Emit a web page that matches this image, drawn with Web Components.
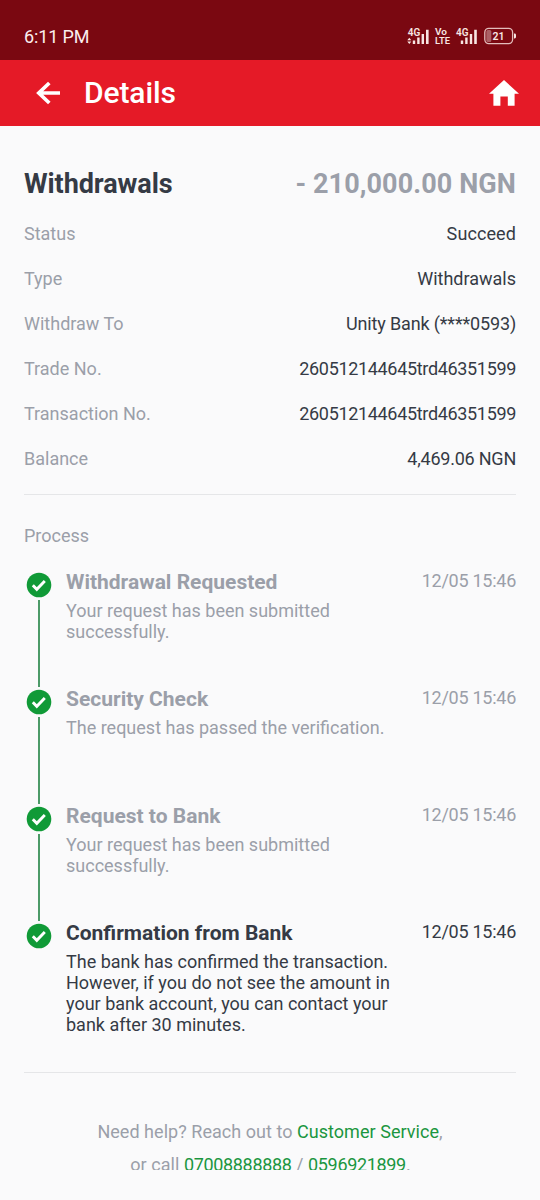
<!DOCTYPE html>
<html lang="en">
<head>
<meta charset="utf-8">
<title>Details</title>
<style>
body{margin:0;background:#fafafb;font-family:Roboto,"Liberation Sans",sans-serif;color:#353a45}
</style>
</head>
<body>
<details-screen></details-screen>
<script>
const define=(name,html)=>{
  const t=document.createElement('template');
  t.innerHTML=html;
  customElements.define(name,class extends HTMLElement{
    constructor(){super();this.attachShadow({mode:'open'}).append(t.content.cloneNode(true));}
  });
};

define('status-bar',`
<style>
:host{display:flex;height:60px;box-sizing:border-box;padding:12px 23px 0 24px;background:#7a0811;color:#fff;align-items:center;justify-content:space-between}
.time{font-size:18px;line-height:24px;letter-spacing:-.13px;color:#fbeeee;padding-top:2px}
svg{display:block}
text{font-family:Roboto,sans-serif;font-weight:600;fill:#f8e6e3}
</style>
<span class="time">6:11 PM</span>
<svg width="112" height="24" viewBox="405 24 112 24">
  <g fill="#f8e6e3">
    <text x="407.7" y="36" font-size="10.8" textLength="12.5" lengthAdjust="spacingAndGlyphs">4G</text>
    <path d="M407.3 40.2l2-2.4 2 2.4zM407.3 41.6h4l-2 2.4z"/>
    <path d="M412.8 40.4h2.4v3.6h-2.4zM417.2 37.4h2.4v6.6h-2.4zM421.6 34h2.4v10h-2.4zM426 29.8h2.6v14.2h-2.6z"/>
    <text x="435" y="35.4" font-size="9.8" textLength="12" lengthAdjust="spacingAndGlyphs">Vo</text>
    <text x="435" y="44.4" font-size="9.6" textLength="15" lengthAdjust="spacingAndGlyphs">LTE</text>
    <text x="456" y="36" font-size="10.8" textLength="12.5" lengthAdjust="spacingAndGlyphs">4G</text>
    <path d="M460.8 40.4h2.4v3.6h-2.4zM465.2 37.4h2.4v6.6h-2.4zM469.8 34h2.4v10h-2.4zM474.2 29.8h2.6v14.2h-2.6z"/>
    <rect x="486.3" y="30" width="5" height="12" rx="1.5" opacity=".4"/>
    <rect x="484.8" y="28.4" width="27.8" height="15.2" rx="4" fill="none" stroke="#e3bdbc" stroke-width="1.3"/>
    <path d="M514 33.6h.6q1.4 0 1.4 1.4v2q0 1.4-1.4 1.4h-.6z"/>
    <text x="492.5" y="40" font-size="11.2" textLength="12" lengthAdjust="spacingAndGlyphs">21</text>
  </g>
</svg>`);

define('title-bar',`
<style>
:host{display:flex;height:66px;box-sizing:border-box;padding:0 21px 0 36px;background:#e51a27;color:#fff;align-items:center}
h1{margin:0 auto 0 24px;font-size:30px;line-height:36px;font-weight:500;letter-spacing:-.1px}
svg{display:block}
</style>
<svg width="24" height="26" viewBox="0 0 24 26" fill="none" stroke="#fff" stroke-width="3.7"><path d="M13.3 3L2.8 13 13.3 23M2.5 13H24"/></svg>
<h1><slot></slot></h1>
<svg width="30" height="28" viewBox="0 0 30 28" fill="#fff"><path d="M15 1L30 14.8H25.6V26.7H18.8V17.6H11.4V26.7H4.4V14.8H0z"/></svg>`);

define('detail-row',`
<style>
:host{display:flex;height:45px;align-items:center;justify-content:space-between;font-size:18px;line-height:21px}
.label{color:#9b9fa9}
.value{letter-spacing:var(--track,0)}
</style>
<span class="label"><slot name="label"></slot></span><span class="value"><slot></slot></span>`);

define('amount-row',`
<style>
:host{display:flex;height:56px;box-sizing:border-box;padding-top:2px;align-items:center;justify-content:space-between;font-size:27px;line-height:32px;font-weight:700;letter-spacing:-.08px}
.amount{color:#9b9fa9;letter-spacing:.1px}
</style>
<span><slot></slot></span><span class="amount"><slot name="amount"></slot></span>`);

define('process-step',`
<style>
:host{display:grid;grid-template-columns:30px 330px 1fr;column-gap:12px;height:117px;color:#9b9fa9;font-size:18px;line-height:21px}
:host([current]){color:#353a45;height:149px}
.rail{display:flex;flex-direction:column;align-items:center;padding-top:2px}
.line{width:2px;height:87px;background:#4c9a68;margin-top:2px}
:host([current]) .line{display:none}
svg{display:block;flex:none}
h2{margin:0 0 5px;font-size:21px;line-height:25px;font-weight:700}
.time{text-align:right;letter-spacing:-.26px}
</style>
<div class="rail">
<svg width="26" height="26" viewBox="0 0 26 26"><circle cx="13" cy="13" r="12.3" fill="#109a37"/><path d="M6.8 13.2l4 4.1 8-8.2" fill="none" stroke="#fff" stroke-width="2.9"/></svg>
<i class="line"></i></div>
<div><h2><slot name="title"></slot></h2><slot></slot></div>
<div class="time"><slot name="time"></slot></div>`);

define('help-footer',`
<style>
:host{display:block;height:55px;overflow:hidden;text-align:center;font-size:18px;line-height:33px;color:#9b9fa9;letter-spacing:.04px}
span{color:#1a9640}
.call{padding-left:1px}
.phone{letter-spacing:-.33px}
</style>
<div>Need help? Reach out to <span>Customer Service</span>,</div>
<div class="call">or call <span class="phone">07008888888</span> / <span class="phone">0596921899</span>.</div>`);

define('details-screen',`
<style>
:host{display:block;height:1200px;overflow:hidden}
main{padding:29px 24px 0}
.process{margin-top:13px;border-top:1px solid #e5e6e8;padding-top:30px;font-size:18px;line-height:21px}
.caption{color:#9b9fa9;margin-bottom:24px}
help-footer{border-top:1px solid #e5e6e8;padding-top:42px;margin-top:2px}
</style>
<status-bar></status-bar>
<title-bar>Details</title-bar>
<main>
<amount-row>Withdrawals<span slot="amount">- 210,000.00 NGN</span></amount-row>
<detail-row style="--track:.1px"><span slot="label">Status</span>Succeed</detail-row>
<detail-row><span slot="label">Type</span>Withdrawals</detail-row>
<detail-row style="--track:-.16px"><span slot="label">Withdraw To</span>Unity Bank (****0593)</detail-row>
<detail-row style="--track:-.33px"><span slot="label">Trade No.</span>260512144645trd46351599</detail-row>
<detail-row style="--track:-.33px"><span slot="label">Transaction No.</span>260512144645trd46351599</detail-row>
<detail-row style="--track:-.23px"><span slot="label">Balance</span>4,469.06 NGN</detail-row>
<section class="process">
<div class="caption">Process</div>
<process-step><span slot="title">Withdrawal Requested</span>Your request has been submitted<br>successfully.<span slot="time">12/05 15:46</span></process-step>
<process-step><span slot="title">Security Check</span>The request has passed the verification.<span slot="time">12/05 15:46</span></process-step>
<process-step><span slot="title">Request to Bank</span>Your request has been submitted<br>successfully.<span slot="time">12/05 15:46</span></process-step>
<process-step current><span slot="title">Confirmation from Bank</span>The bank has confirmed the transaction.<br>However, if you do not see the amount in<br>your bank account, you can contact your<br>bank after 30 minutes.<span slot="time">12/05 15:46</span></process-step>
</section>
<help-footer></help-footer>
</main>`);
</script>
</body>
</html>
